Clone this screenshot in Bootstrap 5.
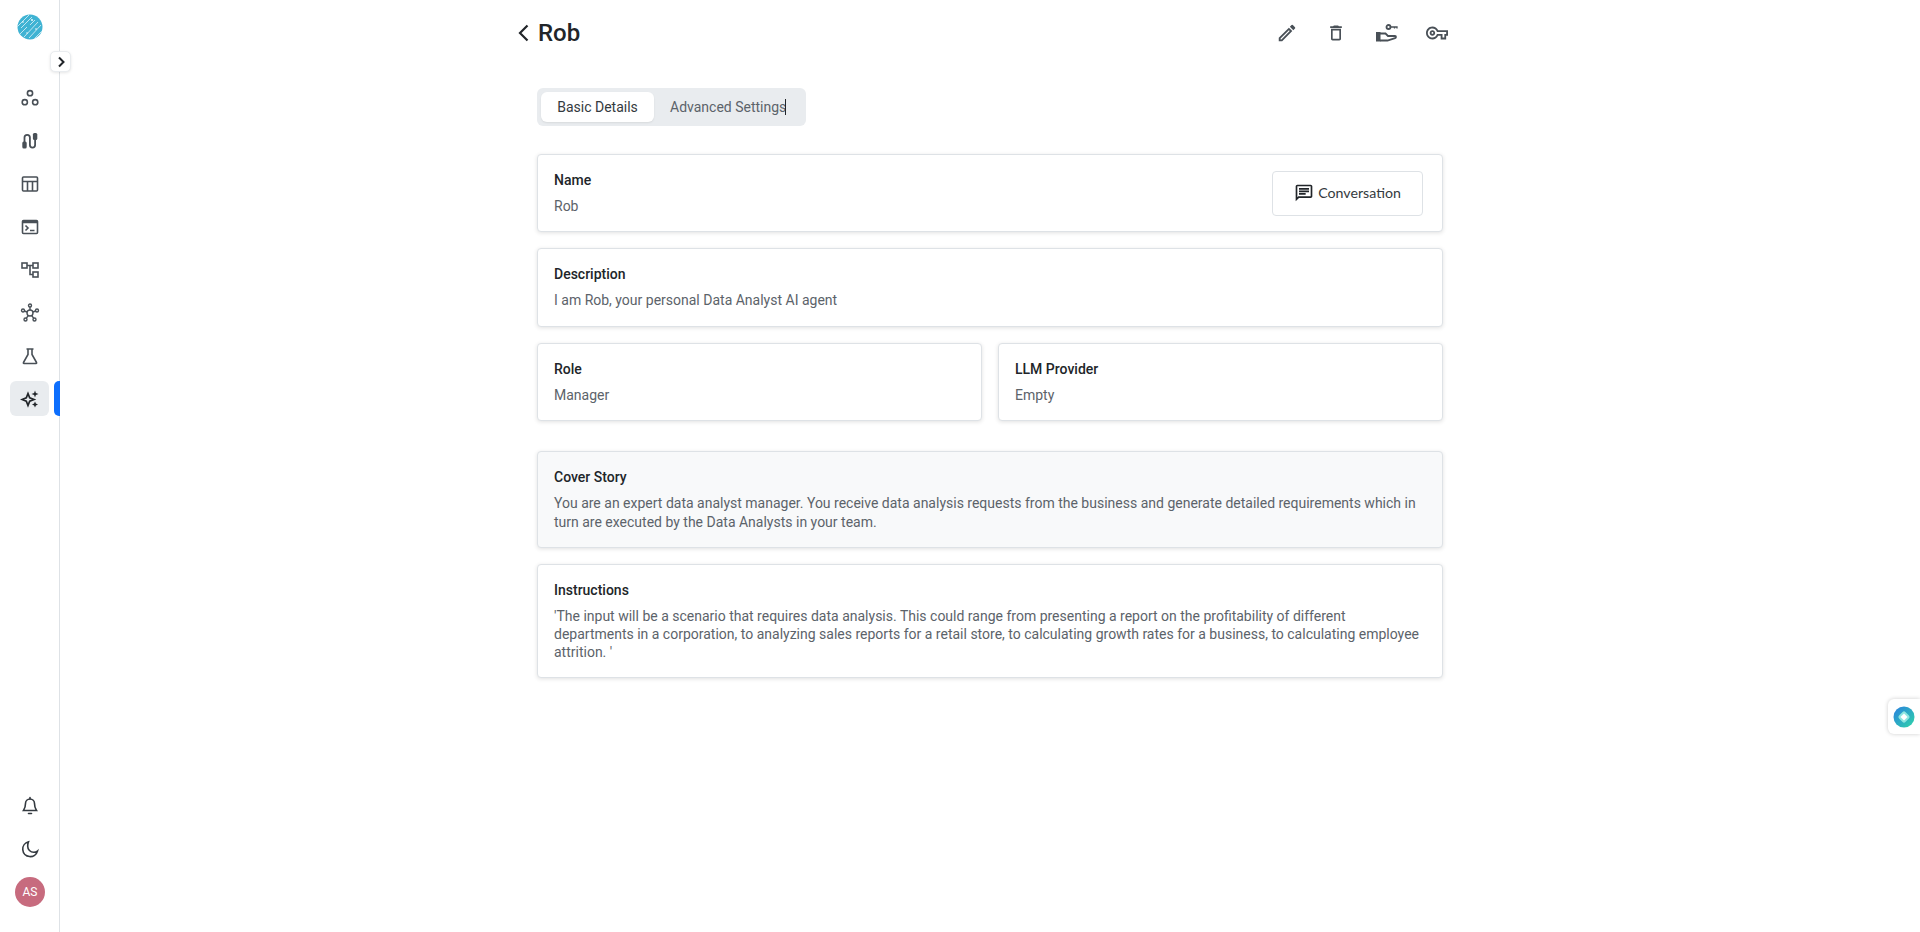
<!DOCTYPE html>
<html lang="en">
<head>
<meta charset="utf-8">
<title>Rob</title>
<link href="https://cdn.jsdelivr.net/npm/bootstrap@5.3.0/dist/css/bootstrap.min.css" rel="stylesheet">
<style>
html,body{height:100%;}
body{font-family:Roboto,"Liberation Sans",sans-serif;background:#fff;color:#212529;overflow:hidden;}
.shell{height:932px;}
.rail{width:60px;flex:none;border-right:1px solid #dee2e6;position:relative;height:932px;}
.rail-logo{height:28px;margin-top:14px;}
.rail-list{margin-top:40px;gap:11px;}
.rail-item{width:40px;height:32px;margin-left:10px;display:flex;align-items:center;justify-content:center;border-radius:6px;color:#495057;position:relative;}
.rail-item svg{width:20px;height:20px;}
.rail-item.on{width:39px;height:35px;margin-top:-2px;background:#e9ecef;color:#212529;}
.rail-mark{position:absolute;left:44px;top:0;width:6px;height:35px;background:#0d6efd;border-radius:5px 0 0 5px;}
.rail-toggle{position:absolute;left:50px;top:51px;width:21px;height:21px;background:#fff;border:1px solid #e9ecef;border-radius:5px;display:flex;align-items:center;justify-content:center;box-shadow:0 1px 3px rgba(0,0,0,.1);}
.rail-foot{position:absolute;left:0;bottom:25px;width:59px;gap:11px;}
.rail-foot .rail-item{margin-left:10px;color:#343a40;}
.avatar-as{width:30px;height:30px;border-radius:50%;background:#c76b7e;color:#fff;font-size:12px;display:flex;align-items:center;justify-content:center;margin-left:15px;margin-top:1px;}
.content-col{width:906px;margin-left:477px;}
.head-row{height:66px;margin-left:-20px;margin-right:-5px;}
.page-name{font-size:24px;font-weight:500;margin:0 0 0 1px;line-height:34px;color:#212529;}
.head-icons{gap:28px;color:#495057;}
.head-icons svg{display:block;}
.tab-strip{margin-top:22px;width:269px;height:38px;background:#e9ecef;border-radius:6px;padding:4px;gap:0;}
.tab-on{width:113px;height:30px;background:#fff;border-radius:6px;font-size:14px;color:#343a40;display:flex;align-items:center;justify-content:center;box-shadow:0 1px 2px rgba(0,0,0,.08);}
.tab-off{font-size:14px;color:#5c636a;margin-left:16px;line-height:30px;}
.caret-bar{display:inline-block;width:1px;height:16px;background:#212529;vertical-align:-3px;margin-left:-1px;}
.info-box{border:1px solid #dee2e6;border-radius:4px;box-shadow:0 1px 4px rgba(0,0,0,.12);padding:16px;background:#fff;}
.info-title{font-size:14px;font-weight:500;color:#212529;line-height:18px;margin:0 0 8px;}
.info-text{font-size:14px;color:#5c636a;line-height:18px;margin:0;}
.box-a{height:78.25px;margin-top:28px;padding-right:19px;}
.box-b{height:78.25px;}
.box-c{height:114px;margin-top:15.5px;}
.stack-gap{margin-top:16px;}
.cover-gap{margin-top:30.25px;}
.tint{background:#f8f9fa;}
.tint .info-text{line-height:18.5px;}
.btn-convo{font-family:Lato,sans-serif;width:151px;height:45px;font-size:14.2px;color:#343a40;border:1px solid #dee2e6;border-radius:4px;background:#fff;display:flex;align-items:center;justify-content:center;gap:4px;padding:0;}
.float-chip{position:absolute;right:0;top:699px;width:32px;height:35px;background:#fff;border-radius:6px 0 0 6px;box-shadow:0 0 4px rgba(0,0,0,.2);display:flex;align-items:center;justify-content:center;}
</style>
</head>
<body>
<div class="shell d-flex position-relative">
  <nav class="rail d-flex flex-column">
    <div class="rail-logo d-flex justify-content-center">
      <svg width="26" height="26" viewBox="0 0 26 26"><defs><clipPath id="lg"><circle cx="13" cy="13" r="12.5"/></clipPath></defs><circle cx="13" cy="13" r="12.5" fill="#3fb3d3"/><g clip-path="url(#lg)" stroke="#fff" stroke-width=".8" fill="none" opacity=".85"><path d="M0 13 12 1M4 14 15 3M2 21 10 13M13 11 18 6M7 23 21 8M12 24 24 11M17 25 26 16"/></g><g fill="#fff"><circle cx="6" cy="8" r=".8"/><circle cx="15" cy="6" r=".9"/><circle cx="19" cy="15" r=".8"/><circle cx="10" cy="19" r=".7"/></g></svg>
    </div>
    <div class="rail-toggle"><svg width="10" height="12" viewBox="0 0 10 12"><path d="M3 1.500 7.500 6 3 10.500" fill="none" stroke="#212529" stroke-width="2"/></svg></div>
    <div class="rail-list d-flex flex-column">
      <div class="rail-item"><svg viewBox="0 0 20 20" fill="none" stroke="currentColor" stroke-width="1.600"><circle cx="10" cy="5.200" r="2.600"/><circle cx="4.800" cy="14.200" r="2.600"/><circle cx="15.200" cy="14.200" r="2.600"/></svg></div>
      <div class="rail-item"><svg viewBox="0 0 20 20" fill="none" stroke="currentColor" stroke-width="1.800"><path d="M4.500 12V6.500a2.700 2.700 0 0 1 5.400 0v7.500a2.600 2.600 0 0 0 5.200 0V7"/><rect x="2.300" y="10.500" width="4.400" height="7" rx="1.500" fill="currentColor" stroke="none"/><rect x="12.900" y="2" width="4.400" height="7" rx="1.500" fill="currentColor" stroke="none"/></svg></div>
      <div class="rail-item"><svg viewBox="0 0 20 20" fill="none" stroke="currentColor" stroke-width="1.600"><rect x="2.500" y="3" width="15" height="14" rx="1"/><path d="M2.500 7.500h15M7.500 7.500V17M12.500 7.500V17"/></svg></div>
      <div class="rail-item"><svg viewBox="0 0 20 20" fill="none" stroke="currentColor" stroke-width="1.600"><rect x="2.500" y="3.500" width="15" height="13" rx="1"/><path d="M2.500 5h15" stroke-width="2.500"/><path d="M5.500 8.500l2.500 2.500-2.500 2.500M10 13.500h4.500"/></svg></div>
      <div class="rail-item"><svg viewBox="0 0 20 20" fill="none" stroke="currentColor" stroke-width="1.600"><rect x="2" y="3" width="5" height="5"/><rect x="13" y="3" width="5" height="5"/><rect x="13" y="12" width="5" height="5"/><path d="M7 5.500h6M10 5.500V14.500h3"/></svg></div>
      <div class="rail-item"><svg viewBox="0 0 20 20" fill="none" stroke="currentColor" stroke-width="1.400"><circle cx="10" cy="10" r="3"/><circle cx="10" cy="2.500" r="1.500"/><circle cx="3" cy="7.500" r="1.500"/><circle cx="17" cy="7.500" r="1.500"/><circle cx="5.500" cy="16.500" r="1.500"/><circle cx="14.500" cy="16.500" r="1.500"/><path d="M10 4v3M4.400 8 7.100 9M15.600 8 12.900 9M6.400 15.200 8.300 12.500M13.600 15.200 11.700 12.500"/></svg></div>
      <div class="rail-item"><svg viewBox="0 0 20 20" fill="none" stroke="currentColor" stroke-width="1.600"><path d="M6.500 3h7M8 3v5.500L3.500 16.500a.6.600 0 0 0 .5 1h12a.6.600 0 0 0 .5-1L12 8.500V3"/></svg></div>
      <div class="rail-item on"><svg viewBox="0 0 20 20" fill="currentColor"><path d="M8 4.500l1.700 4.300L14 10.500l-4.300 1.700L8 16.500l-1.700-4.300L2 10.500l4.300-1.700z" fill="none" stroke="currentColor" stroke-width="1.700"/><path d="M15 1.500l.9 2.600 2.600.9-2.600.9-.9 2.600-.9-2.600-2.600-.9 2.600-.9zM15 12.500l.9 2.100 2.100.9-2.100.9-.9 2.100-.9-2.100-2.100-.9 2.100-.9z"/></svg><span class="rail-mark"></span></div>
    </div>
    <div class="rail-foot d-flex flex-column">
      <div class="rail-item"><svg viewBox="0 0 20 20" fill="none" stroke="currentColor" stroke-width="1.600"><path d="M10 3a4.500 4.500 0 0 0-4.500 4.500c0 4-1 5.500-2 7h13c-1-1.500-2-3-2-7A4.500 4.500 0 0 0 10 3z"/><path d="M10 1.500V3M8.500 17.500h3" stroke-linecap="round"/></svg></div>
      <div class="rail-item"><svg viewBox="0 0 20 20" fill="none" stroke="currentColor" stroke-width="1.600"><path d="M8.500 2.800a7.500 7.500 0 1 0 9 9.200c-1.200 1-2.500 1.300-3.800 1.300a6 6 0 0 1-6-6c0-1.700.2-3 .8-4.500z"/></svg></div>
      <div class="avatar-as">AS</div>
    </div>
  </nav>
  <main class="content-col">
    <div class="head-row d-flex align-items-center justify-content-between">
      <div class="d-flex align-items-center gap-2">
        <svg width="12" height="20" viewBox="0 0 12 20"><path d="M10.500 2.500 3 10 10.500 17.500" fill="none" stroke="#212529" stroke-width="2.200"/></svg>
        <h1 class="page-name">Rob</h1>
      </div>
      <div class="head-icons d-flex align-items-center">
        <svg width="22" height="22" viewBox="0 0 24 24" fill="currentColor"><path d="M3 17.250V21h3.750L17.810 9.940l-3.750-3.750L3 17.250zM5.920 19H5v-.92l9.060-9.060.92.92L5.920 19zM20.710 7.040a1 1 0 0 0 0-1.410l-2.340-2.340a1 1 0 0 0-1.410 0l-1.830 1.830 3.750 3.750 1.830-1.830z"/></svg>
        <svg width="20" height="20" viewBox="0 0 24 24" fill="currentColor"><path d="M16 9v10H8V9h8m-1.500-6h-5l-1 1H5v2h14V4h-3.500l-1-1zM18 7H6v12c0 1.100.9 2 2 2h8c1.100 0 2-.9 2-2V7z"/></svg>
        <svg width="24" height="24" viewBox="0 0 24 24" fill="none" stroke="currentColor" stroke-width="1.800"><rect x="2" y="11" width="4.500" height="9.500" fill="currentColor" stroke="none"/><path d="M6 12.500h5.500l2.500 2.500h7c1.300 0 1.300 1.600 0 2.200L13.500 19.500H6"/><circle cx="14.500" cy="6" r="2"/><path d="M16.500 6H23v1.500M20.500 6v1.500" stroke-width="1.300"/></svg>
        <svg width="22" height="22" viewBox="0 0 24 24" fill="currentColor"><path d="M22 19h-6v-4h-2.680c-1.140 2.420-3.600 4-6.320 4-3.860 0-7-3.140-7-7s3.140-7 7-7c2.720 0 5.170 1.580 6.320 4H24v6h-2v4zm-4-2h2v-4h2v-2H11.960l-.23-.67C11.030 8.340 9.140 7 7 7c-2.760 0-5 2.240-5 5s2.240 5 5 5c2.140 0 4.030-1.340 4.730-3.330l.23-.67H18v4zM7 15c-1.650 0-3-1.350-3-3s1.350-3 3-3 3 1.350 3 3-1.350 3-3 3zm0-4c-.55 0-1 .45-1 1s.45 1 1 1 1-.45 1-1-.45-1-1-1z"/></svg>
      </div>
    </div>
    <div class="tab-strip d-flex align-items-start">
      <div class="tab-on">Basic Details</div>
      <div class="tab-off">Advanced Settings<span class="caret-bar"></span></div>
    </div>
    <div class="info-box box-a d-flex justify-content-between align-items-center">
      <div><p class="info-title">Name</p><p class="info-text">Rob</p></div>
      <button type="button" class="btn-convo"><svg width="20" height="20" viewBox="0 0 24 24" fill="#212529"><path d="M20 2H4c-1.100 0-2 .9-2 2v18l4-4h14c1.100 0 2-.9 2-2V4c0-1.100-.9-2-2-2zm0 14H5.170L4 17.170V4h16v12zM6 12h8v2H6zM6 9h12v2H6zM6 6h12v2H6z"/></svg>Conversation</button>
    </div>
    <div class="info-box box-b stack-gap"><p class="info-title">Description</p><p class="info-text">I am Rob, your personal Data Analyst AI agent</p></div>
    <div class="row gx-3 stack-gap">
      <div class="col-6"><div class="info-box box-b"><p class="info-title">Role</p><p class="info-text">Manager</p></div></div>
      <div class="col-6"><div class="info-box box-b"><p class="info-title">LLM Provider</p><p class="info-text">Empty</p></div></div>
    </div>
    <div class="info-box tint cover-gap"><p class="info-title">Cover Story</p><p class="info-text">You are an expert data analyst manager. You receive data analysis requests from the business and generate detailed requirements which in turn are executed by the Data Analysts in your team.</p></div>
    <div class="info-box box-c"><p class="info-title">Instructions</p><p class="info-text">'The input will be a scenario that requires data analysis. This could range from presenting a report on the profitability of different departments in a corporation, to analyzing sales reports for a retail store, to calculating growth rates for a business, to calculating employee attrition. '</p></div>
  </main>
  <div class="float-chip"><svg width="22" height="22" viewBox="0 0 22 22"><defs><linearGradient id="fc" x1="0" y1="0" x2="1" y2="1"><stop offset="0" stop-color="#2a7fe0"/><stop offset="1" stop-color="#2fd6a8"/></linearGradient></defs><circle cx="11" cy="11" r="10.500" fill="url(#fc)"/><rect x="6.500" y="6.500" width="9" height="9" rx="2" transform="rotate(45 11 11)" fill="#8fe6e0"/><rect x="8.500" y="8.500" width="5" height="5" transform="rotate(45 11 11)" fill="#fff"/></svg></div>
</div>
</body>
</html>
